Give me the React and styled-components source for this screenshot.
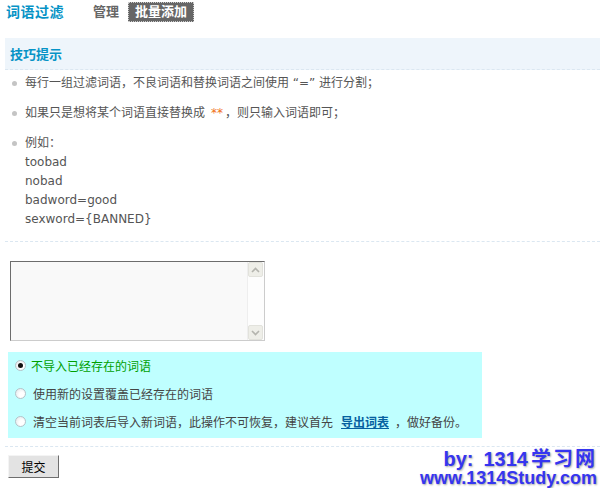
import React from 'react';
import styled, { createGlobalStyle } from 'styled-components';

const GlobalStyle = createGlobalStyle`
    html, body {
        margin: 0;
        padding: 0;
        background: #fff;
    }
    body {
        font-family: "DejaVu Sans", "Noto Sans CJK SC", sans-serif;
        font-size: 12px;
        color: #555;
    }
`;

const Page = styled.div`
    position: relative;
    width: 600px;
    height: 488px;
    padding-left: 5px;
    box-sizing: border-box;
    overflow: hidden;
`;

const Header = styled.div`
    display: flex;
    align-items: center;
    height: 24px;
`;

const Title = styled.h3`
    margin: -2px 0 0 1px;
    font-size: 14px;
    letter-spacing: 0.5px;
    color: #0693c6;
`;

const Nav = styled.div`
    display: flex;
    align-items: center;
    gap: 8px;
    margin-left: 28px;
`;

const NavItem = styled.a`
    display: block;
    font-size: 13px;
    font-weight: bold;
    line-height: 18px;
    padding: 0 ${p => (p.$active ? '6px' : '0')};
    color: ${p => (p.$active ? '#fff' : '#666')};
    background: ${p => (p.$active ? '#666' : 'transparent')};
    border: 1px dotted ${p => (p.$active ? '#ccc' : 'transparent')};
    text-decoration: none;
`;

const Tips = styled.div`
    margin-top: 14px;
`;

const TipsHead = styled.div`
    display: flex;
    align-items: center;
    height: 31px;
    padding-left: 5px;
    background: #eef5fb;
    border-bottom: 1px dashed #dbe7f1;
    font-size: 13px;
    font-weight: bold;
    color: #0693c6;
`;

const TipList = styled.ul`
    list-style: none;
    margin: 0;
    padding: 4px 0 1px 20px;
    border-bottom: 1px dashed #dbe7f1;
`;

const Tip = styled.li`
    position: relative;
    line-height: 19px;
    padding-bottom: 11px;

    &:before {
        content: '';
        position: absolute;
        left: -13px;
        top: 7px;
        width: 5px;
        height: 5px;
        border-radius: 50%;
        background: #c4c4c4;
    }
`;

const Stars = styled.span`
    color: #f07020;
    margin: 0 2px 0 6px;
`;

const Example = styled.div`
    line-height: 19px;
`;

const Editor = styled.div`
    display: flex;
    width: 255px;
    height: 80px;
    margin: 19px 0 0 5px;
    box-sizing: border-box;
    border: 1px solid #ccc;
    border-top-color: #6d6d6d;
    border-left-color: #6d6d6d;
    background: #f9f9f9;
`;

const Area = styled.textarea`
    flex: 1;
    border: none;
    outline: none;
    resize: none;
    background: transparent;
    font: inherit;
    padding: 2px;
`;

const ScrollBar = styled.div`
    display: flex;
    flex-direction: column;
    justify-content: space-between;
    width: 16px;
    background: #fdfdfd;
    border-left: 1px solid #eee;
`;

const ScrollButton = styled.div`
    display: flex;
    align-items: center;
    justify-content: center;
    width: 15px;
    height: 15px;
    box-sizing: border-box;
    border: 1px solid #e2e2dc;
    border-radius: 2px;
    background: #eeeee8;
`;

const Options = styled.div`
    display: flex;
    flex-direction: column;
    gap: 2px;
    width: 474px;
    margin: 11px 0 0 3px;
    padding: 0 0 4px;
    background: #bfffff;
    font-family: "Noto Sans CJK SC", sans-serif;
`;

const Option = styled.label`
    display: flex;
    align-items: center;
    height: 26px;
    padding-left: 7px;
    color: ${p => (p.$checked ? '#00a000' : '#444')};
`;

const Radio = styled.span`
    position: relative;
    flex: none;
    width: 11px;
    height: 11px;
    margin-right: ${p => (p.$checked ? '5px' : '7px')};
    box-sizing: border-box;
    border-radius: 50%;
    border: 1px solid #b6c2c8;
    background: radial-gradient(circle at 65% 65%, #ffffff 30%, #dfe6ea);

    &:after {
        content: '';
        display: ${p => (p.$checked ? 'block' : 'none')};
        position: absolute;
        left: 2px;
        top: 2px;
        width: 5px;
        height: 5px;
        border-radius: 50%;
        background: #111;
    }
`;

const ExportLink = styled.a`
    margin: 0 6px 0 8px;
    font-weight: bold;
    color: #0560a0;
    text-decoration: underline;
`;

const Footer = styled.div`
    margin-top: 8px;
    padding-top: 8px;
    border-top: 1px dashed #dbe7f1;
`;

const Submit = styled.button`
    width: 51px;
    height: 23px;
    margin-left: 3px;
    padding: 0;
    font: inherit;
    color: #000;
    background: #e3e3e3;
    border: 1px solid;
    border-color: #f4f4f4 #6e6e6e #6e6e6e #f4f4f4;
`;

const Watermark = styled.div`
    position: absolute;
    right: 3px;
    bottom: 0;
    text-align: right;
    font-family: "Liberation Sans", "Noto Sans CJK SC", sans-serif;
    font-weight: bold;
    color: #3535f0;
    text-shadow: 1px 1px 2px rgba(0, 0, 0, 0.35);
`;

const MarkLine = styled.div`
    font-size: ${p => p.$size}px;
    line-height: 19px;
`;

const By = styled.span`
    margin-right: 10px;
`;

const SiteName = styled.span`
    margin-left: 3px;
    letter-spacing: 2px;
`;

const Chevron = ({ up }) => (
    <svg width="9" height="6" viewBox="0 0 9 6">
        <path
            d={up ? 'M1 5 L4.5 1.5 L8 5' : 'M1 1 L4.5 4.5 L8 1'}
            fill="none"
            stroke="#b4b4ae"
            strokeWidth="1.6"
        />
    </svg>
);

const options = [
    { label: '不导入已经存在的词语', checked: true },
    { label: '使用新的设置覆盖已经存在的词语' },
];

export default function App() {
    return (
        <Page>
            <GlobalStyle />
            <Header>
                <Title>词语过滤</Title>
                <Nav>
                    <NavItem>管理</NavItem>
                    <NavItem $active>批量添加</NavItem>
                </Nav>
            </Header>

            <Tips>
                <TipsHead>技巧提示</TipsHead>
                <TipList>
                    <Tip>每行一组过滤词语，不良词语和替换词语之间使用 “=” 进行分割；</Tip>
                    <Tip>
                        如果只是想将某个词语直接替换成<Stars>**</Stars>，则只输入词语即可；
                    </Tip>
                    <Tip>
                        例如：
                        <Example>toobad</Example>
                        <Example>nobad</Example>
                        <Example>badword=good</Example>
                        <Example>sexword={'{BANNED}'}</Example>
                    </Tip>
                </TipList>
            </Tips>

            <Editor>
                <Area />
                <ScrollBar>
                    <ScrollButton><Chevron up /></ScrollButton>
                    <ScrollButton><Chevron /></ScrollButton>
                </ScrollBar>
            </Editor>

            <Options>
                {options.map(o => (
                    <Option key={o.label} $checked={o.checked}>
                        <Radio $checked={o.checked} />
                        {o.label}
                    </Option>
                ))}
                <Option>
                    <Radio />
                    清空当前词表后导入新词语，此操作不可恢复，建议首先
                    <ExportLink>导出词表</ExportLink>，做好备份。
                </Option>
            </Options>

            <Footer>
                <Submit>提交</Submit>
            </Footer>

            <Watermark>
                <MarkLine $size={20}>
                    <By>by:</By>1314<SiteName>学习网</SiteName>
                </MarkLine>
                <MarkLine $size={18}>www.1314Study.com</MarkLine>
            </Watermark>
        </Page>
    );
}
